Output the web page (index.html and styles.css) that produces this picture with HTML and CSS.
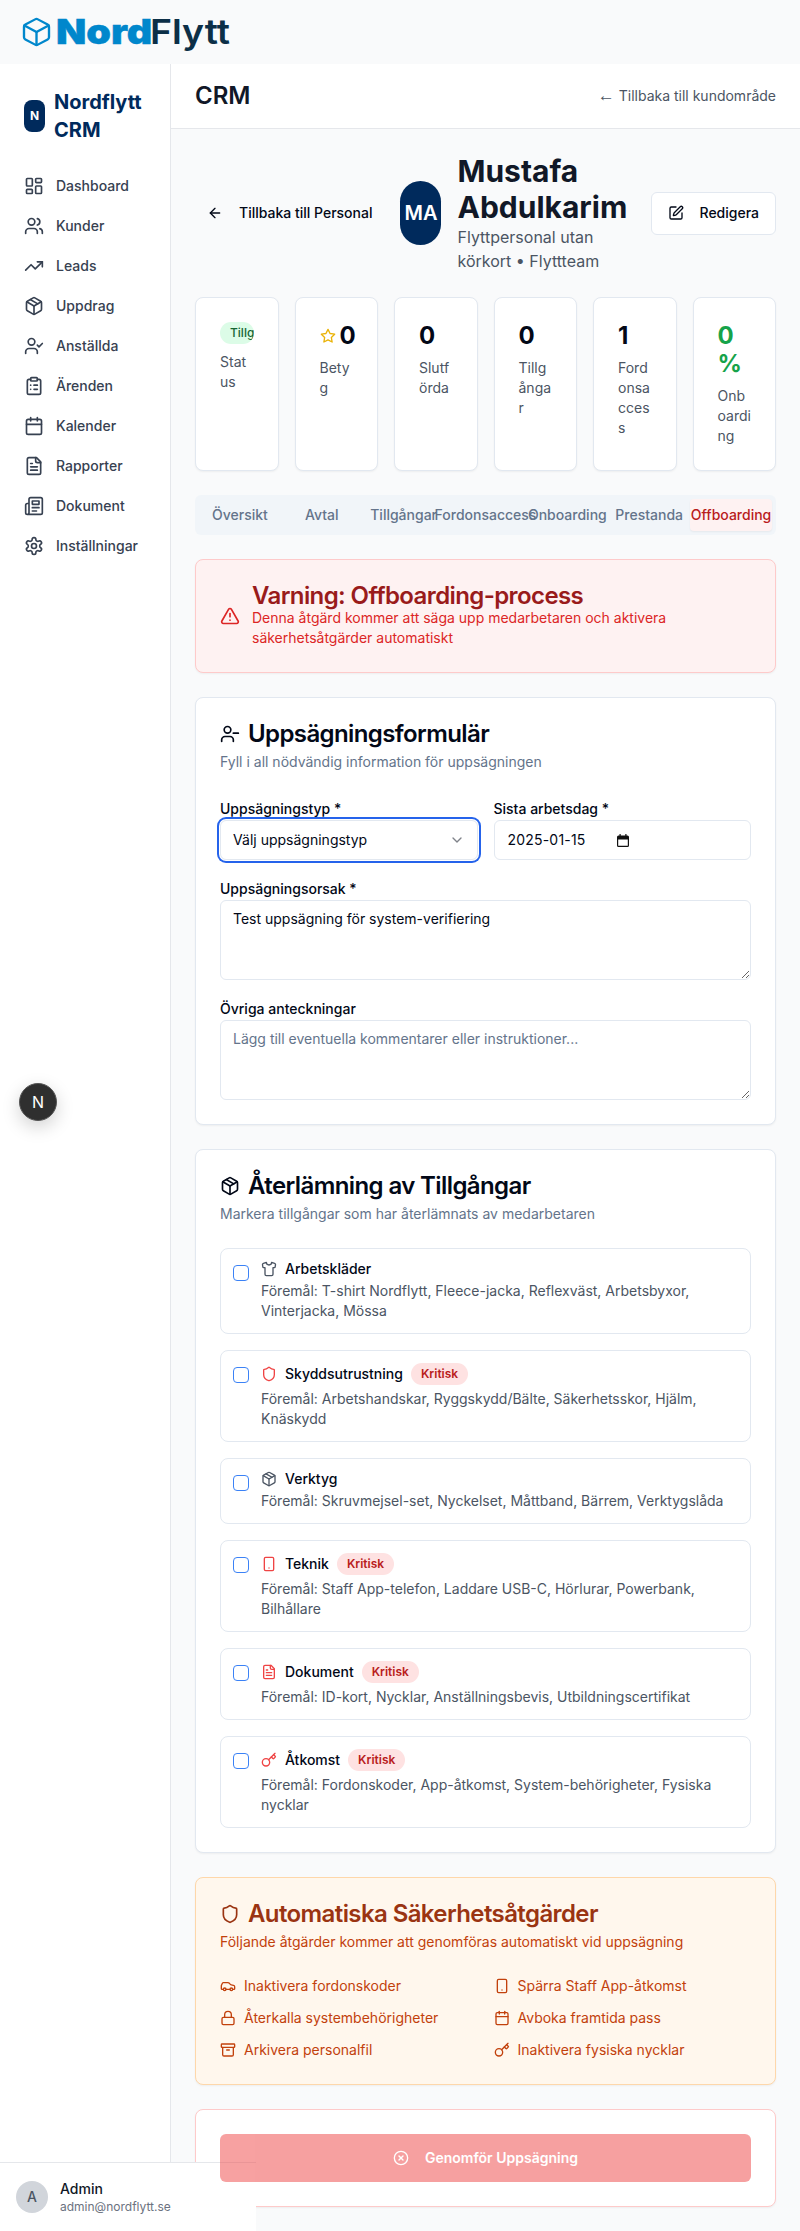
FILE: index.html
```html
<!DOCTYPE html>
<html lang="sv">
<head>
    <meta charset="UTF-8">
    <meta name="viewport" content="width=device-width, initial-scale=1.0">
    <title>Nordflytt CRM - Offboarding</title>
    <link rel="stylesheet" href="styles.css">
</head>
<body>
    <svg class="sprite" xmlns="http://www.w3.org/2000/svg">
        <symbol id="i-dashboard" viewBox="0 0 24 24"><rect x="3" y="3" width="7" height="9" rx="1"/><rect x="14" y="3" width="7" height="5" rx="1"/><rect x="14" y="12" width="7" height="9" rx="1"/><rect x="3" y="16" width="7" height="5" rx="1"/></symbol>
        <symbol id="i-users" viewBox="0 0 24 24"><path d="M16 21v-2a4 4 0 0 0-4-4H6a4 4 0 0 0-4 4v2"/><circle cx="9" cy="7" r="4"/><path d="M22 21v-2a4 4 0 0 0-3-3.87"/><path d="M16 3.13a4 4 0 0 1 0 7.75"/></symbol>
        <symbol id="i-trending" viewBox="0 0 24 24"><polyline points="22 7 13.5 15.5 8.5 10.5 2 17"/><polyline points="16 7 22 7 22 13"/></symbol>
        <symbol id="i-package" viewBox="0 0 24 24"><path d="m7.5 4.27 9 5.15"/><path d="M21 8a2 2 0 0 0-1-1.73l-7-4a2 2 0 0 0-2 0l-7 4A2 2 0 0 0 3 8v8a2 2 0 0 0 1 1.73l7 4a2 2 0 0 0 2 0l7-4A2 2 0 0 0 21 16Z"/><path d="m3.3 7 8.7 5 8.7-5"/><path d="M12 22V12"/></symbol>
        <symbol id="i-user-check" viewBox="0 0 24 24"><path d="M16 21v-2a4 4 0 0 0-4-4H6a4 4 0 0 0-4 4v2"/><circle cx="9" cy="7" r="4"/><polyline points="16 11 18 13 22 9"/></symbol>
        <symbol id="i-user-minus" viewBox="0 0 24 24"><path d="M16 21v-2a4 4 0 0 0-4-4H6a4 4 0 0 0-4 4v2"/><circle cx="9" cy="7" r="4"/><path d="M22 11h-6"/></symbol>
        <symbol id="i-clipboard" viewBox="0 0 24 24"><rect x="8" y="2" width="8" height="4" rx="1"/><path d="M16 4h2a2 2 0 0 1 2 2v14a2 2 0 0 1-2 2H6a2 2 0 0 1-2-2V6a2 2 0 0 1 2-2h2"/><path d="M12 11h4"/><path d="M12 16h4"/><path d="M8 11h.01"/><path d="M8 16h.01"/></symbol>
        <symbol id="i-calendar" viewBox="0 0 24 24"><path d="M8 2v4"/><path d="M16 2v4"/><rect x="3" y="4" width="18" height="18" rx="2"/><path d="M3 10h18"/></symbol>
        <symbol id="i-file" viewBox="0 0 24 24"><path d="M15 2H6a2 2 0 0 0-2 2v16a2 2 0 0 0 2 2h12a2 2 0 0 0 2-2V7Z"/><path d="M14 2v4a2 2 0 0 0 2 2h4"/><path d="M10 9H8"/><path d="M16 13H8"/><path d="M16 17H8"/></symbol>
        <symbol id="i-newspaper" viewBox="0 0 24 24"><path d="M4 22h16a2 2 0 0 0 2-2V4a2 2 0 0 0-2-2H8a2 2 0 0 0-2 2v16a2 2 0 0 1-2 2Zm0 0a2 2 0 0 1-2-2v-9c0-1.1.9-2 2-2h2"/><path d="M18 14h-8"/><path d="M15 18h-5"/><path d="M10 6h8v4h-8V6Z"/></symbol>
        <symbol id="i-settings" viewBox="0 0 24 24"><path d="M12.22 2h-.44a2 2 0 0 0-2 2v.18a2 2 0 0 1-1 1.73l-.43.25a2 2 0 0 1-2 0l-.15-.08a2 2 0 0 0-2.73.73l-.22.38a2 2 0 0 0 .73 2.73l.15.1a2 2 0 0 1 1 1.72v.51a2 2 0 0 1-1 1.74l-.15.09a2 2 0 0 0-.73 2.73l.22.38a2 2 0 0 0 2.73.73l.15-.08a2 2 0 0 1 2 0l.43.25a2 2 0 0 1 1 1.73V20a2 2 0 0 0 2 2h.44a2 2 0 0 0 2-2v-.18a2 2 0 0 1 1-1.73l.43-.25a2 2 0 0 1 2 0l.15.08a2 2 0 0 0 2.73-.73l.22-.39a2 2 0 0 0-.73-2.73l-.15-.08a2 2 0 0 1-1-1.74v-.5a2 2 0 0 1 1-1.74l.15-.09a2 2 0 0 0 .73-2.73l-.22-.38a2 2 0 0 0-2.73-.73l-.15.08a2 2 0 0 1-2 0l-.43-.25a2 2 0 0 1-1-1.73V4a2 2 0 0 0-2-2z"/><circle cx="12" cy="12" r="3"/></symbol>
        <symbol id="i-arrow-left" viewBox="0 0 24 24"><path d="m12 19-7-7 7-7"/><path d="M19 12H5"/></symbol>
        <symbol id="i-pen" viewBox="0 0 24 24"><path d="M12 3H5a2 2 0 0 0-2 2v14a2 2 0 0 0 2 2h14a2 2 0 0 0 2-2v-7"/><path d="M18.375 2.625a1 1 0 0 1 3 3l-9.013 9.014a2 2 0 0 1-.853.505l-2.873.84a.5.5 0 0 1-.62-.62l.84-2.873a2 2 0 0 1 .506-.852z"/></symbol>
        <symbol id="i-star" viewBox="0 0 24 24"><polygon points="12 2 15.09 8.26 22 9.27 17 14.14 18.18 21.02 12 17.77 5.82 21.02 7 14.14 2 9.27 8.91 8.26 12 2"/></symbol>
        <symbol id="i-alert" viewBox="0 0 24 24"><path d="m21.73 18-8-14a2 2 0 0 0-3.48 0l-8 14A2 2 0 0 0 4 21h16a2 2 0 0 0 1.73-3"/><path d="M12 9v4"/><path d="M12 17h.01"/></symbol>
        <symbol id="i-chevron" viewBox="0 0 24 24"><path d="m6 9 6 6 6-6"/></symbol>
        <symbol id="i-shirt" viewBox="0 0 24 24"><path d="M20.38 3.46 16 2a4 4 0 0 1-8 0L3.62 3.46a2 2 0 0 0-1.34 2.23l.58 3.47a1 1 0 0 0 .99.84H6v10c0 1.1.9 2 2 2h8a2 2 0 0 0 2-2V10h2.15a1 1 0 0 0 .99-.84l.58-3.47a2 2 0 0 0-1.34-2.23z"/></symbol>
        <symbol id="i-shield" viewBox="0 0 24 24"><path d="M20 13c0 5-3.5 7.5-7.66 8.95a1 1 0 0 1-.67-.01C7.5 20.5 4 18 4 13V6a1 1 0 0 1 1-1c2 0 4.5-1.2 6.24-2.72a1.17 1.17 0 0 1 1.52 0C14.51 3.81 17 5 19 5a1 1 0 0 1 1 1z"/></symbol>
        <symbol id="i-phone" viewBox="0 0 24 24"><rect x="5" y="2" width="14" height="20" rx="2"/><path d="M12 18h.01"/></symbol>
        <symbol id="i-key" viewBox="0 0 24 24"><path d="m15.5 7.5 2.3 2.3a1 1 0 0 0 1.4 0l2.1-2.1a1 1 0 0 0 0-1.4L19 4"/><path d="m21 2-9.6 9.6"/><circle cx="7.5" cy="15.5" r="5.5"/></symbol>
        <symbol id="i-car" viewBox="0 0 24 24"><path d="M19 17h2c.6 0 1-.4 1-1v-3c0-.9-.7-1.7-1.5-1.9C18.7 10.6 16 10 16 10s-1.3-1.4-2.2-2.3c-.5-.4-1.1-.7-1.8-.7H5c-.6 0-1.1.4-1.4.9l-1.4 2.9A3.7 3.7 0 0 0 2 12v4c0 .6.4 1 1 1h2"/><circle cx="7" cy="17" r="2"/><path d="M9 17h6"/><circle cx="17" cy="17" r="2"/></symbol>
        <symbol id="i-lock" viewBox="0 0 24 24"><rect x="3" y="11" width="18" height="11" rx="2"/><path d="M7 11V7a5 5 0 0 1 10 0v4"/></symbol>
        <symbol id="i-archive" viewBox="0 0 24 24"><rect x="2" y="3" width="20" height="5" rx="1"/><path d="M4 8v11a2 2 0 0 0 2 2h12a2 2 0 0 0 2-2V8"/><path d="M10 12h4"/></symbol>
        <symbol id="i-circle-x" viewBox="0 0 24 24"><circle cx="12" cy="12" r="10"/><path d="m15 9-6 6"/><path d="m9 9 6 6"/></symbol>
    </svg>

    <div class="logo-bar">
        <svg class="logo-cube" viewBox="3 2 18 20" preserveAspectRatio="none">
            <path d="M21 8a2 2 0 0 0-1-1.73l-7-4a2 2 0 0 0-2 0l-7 4A2 2 0 0 0 3 8v8a2 2 0 0 0 1 1.73l7 4a2 2 0 0 0 2 0l7-4A2 2 0 0 0 21 16Z"/>
            <path d="m3.3 7 8.7 5 8.7-5"/>
            <path d="M12 22V12"/>
        </svg>
        <span class="logo-text"><span class="logo-nord">Nord</span><span class="logo-flytt">Flytt</span></span>
    </div>

    <div class="app">
        <aside class="sidebar">
            <div class="brand">
                <div class="brand-mark">N</div>
                <div class="brand-name">Nordflytt CRM</div>
            </div>
            <nav class="nav">
                <a class="nav-item"><svg class="icon icon-20"><use href="#i-dashboard"/></svg>Dashboard</a>
                <a class="nav-item"><svg class="icon icon-20"><use href="#i-users"/></svg>Kunder</a>
                <a class="nav-item"><svg class="icon icon-20"><use href="#i-trending"/></svg>Leads</a>
                <a class="nav-item"><svg class="icon icon-20"><use href="#i-package"/></svg>Uppdrag</a>
                <a class="nav-item"><svg class="icon icon-20"><use href="#i-user-check"/></svg>Anställda</a>
                <a class="nav-item"><svg class="icon icon-20"><use href="#i-clipboard"/></svg>Ärenden</a>
                <a class="nav-item"><svg class="icon icon-20"><use href="#i-calendar"/></svg>Kalender</a>
                <a class="nav-item"><svg class="icon icon-20"><use href="#i-file"/></svg>Rapporter</a>
                <a class="nav-item"><svg class="icon icon-20"><use href="#i-newspaper"/></svg>Dokument</a>
                <a class="nav-item"><svg class="icon icon-20"><use href="#i-settings"/></svg>Inställningar</a>
            </nav>
            <div class="user-box">
                <div class="user-avatar">A</div>
                <div>
                    <div class="user-name">Admin</div>
                    <div class="user-mail">admin@nordflytt.se</div>
                </div>
            </div>
        </aside>

        <div class="dev-badge">N</div>

        <div class="main">
            <header class="topbar">
                <h1>CRM</h1>
                <a class="topbar-link"><span class="topbar-arrow">←</span> Tillbaka till kundområde</a>
            </header>

            <main class="content">
                <div class="profile">
                    <a class="back-link"><svg class="icon"><use href="#i-arrow-left"/></svg>Tillbaka till Personal</a>
                    <div class="profile-avatar">MA</div>
                    <div class="profile-info">
                        <h2>Mustafa Abdulkarim</h2>
                        <p>Flyttpersonal utan körkort • Flyttteam</p>
                    </div>
                    <button class="edit-btn"><svg class="icon"><use href="#i-pen"/></svg>Redigera</button>
                </div>

                <div class="stats">
                    <div class="stat">
                        <div class="status-badge">Tillgänglig</div>
                        <div class="stat-label">Status</div>
                    </div>
                    <div class="stat">
                        <div class="stat-value stat-rating"><svg class="icon star"><use href="#i-star"/></svg>0</div>
                        <div class="stat-label">Betyg</div>
                    </div>
                    <div class="stat">
                        <div class="stat-value">0</div>
                        <div class="stat-label">Slutförda</div>
                    </div>
                    <div class="stat">
                        <div class="stat-value">0</div>
                        <div class="stat-label">Tillgångar</div>
                    </div>
                    <div class="stat">
                        <div class="stat-value">1</div>
                        <div class="stat-label">Fordonsaccess</div>
                    </div>
                    <div class="stat">
                        <div class="stat-value stat-green">0%</div>
                        <div class="stat-label">Onboarding</div>
                    </div>
                </div>

                <div class="tabs">
                    <div class="tab">Översikt</div>
                    <div class="tab">Avtal</div>
                    <div class="tab">Tillgångar</div>
                    <div class="tab">Fordonsaccess</div>
                    <div class="tab">Onboarding</div>
                    <div class="tab">Prestanda</div>
                    <div class="tab tab-active">Offboarding</div>
                </div>

                <div class="warning">
                    <svg class="icon icon-20"><use href="#i-alert"/></svg>
                    <div>
                        <h3 class="card-title">Varning: Offboarding-process</h3>
                        <p class="warning-text">Denna åtgärd kommer att säga upp medarbetaren och aktivera säkerhetsåtgärder automatiskt</p>
                    </div>
                </div>

                <section class="card">
                    <h3 class="card-title card-title-icon"><svg class="icon icon-20"><use href="#i-user-minus"/></svg>Uppsägningsformulär</h3>
                    <p class="card-desc">Fyll i all nödvändig information för uppsägningen</p>
                    <form class="form">
                        <div class="form-row">
                            <div>
                                <label class="label">Uppsägningstyp *</label>
                                <button type="button" class="select-btn">Välj uppsägningstyp<svg class="icon chevron"><use href="#i-chevron"/></svg></button>
                            </div>
                            <div>
                                <label class="label">Sista arbetsdag *</label>
                                <div class="input date-field">
                                    <span class="date-value">2025-01-15</span>
                                    <svg class="date-icon" viewBox="0 0 12 13"><path d="M1.5 1.5h1V0h1.2v1.5h4.6V0h1.2v1.5h1A1.5 1.5 0 0 1 12 3v8.5a1.5 1.5 0 0 1-1.5 1.5h-9A1.5 1.5 0 0 1 0 11.5V3a1.5 1.5 0 0 1 1.5-1.5Zm-.3 4v6a.3.3 0 0 0 .3.3h9a.3.3 0 0 0 .3-.3v-6Z"/></svg>
                                </div>
                            </div>
                        </div>
                        <div>
                            <label class="label" for="reason">Uppsägningsorsak *</label>
                            <textarea class="input textarea" id="reason">Test uppsägning för system-verifiering</textarea>
                        </div>
                        <div>
                            <label class="label" for="notes">Övriga anteckningar</label>
                            <textarea class="input textarea" id="notes" placeholder="Lägg till eventuella kommentarer eller instruktioner..."></textarea>
                        </div>
                    </form>
                </section>

                <section class="card">
                    <h3 class="card-title card-title-icon"><svg class="icon icon-20"><use href="#i-package"/></svg>Återlämning av Tillgångar</h3>
                    <p class="card-desc">Markera tillgångar som har återlämnats av medarbetaren</p>
                    <div class="assets">
                        <div class="asset">
                            <span class="checkbox"></span>
                            <div>
                                <div class="asset-head"><svg class="icon icon-gray"><use href="#i-shirt"/></svg><span class="asset-name">Arbetskläder</span></div>
                                <p class="asset-items">Föremål: T-shirt Nordflytt, Fleece-jacka, Reflexväst, Arbetsbyxor, Vinterjacka, Mössa</p>
                            </div>
                        </div>
                        <div class="asset">
                            <span class="checkbox"></span>
                            <div>
                                <div class="asset-head"><svg class="icon icon-red"><use href="#i-shield"/></svg><span class="asset-name">Skyddsutrustning</span><span class="critical">Kritisk</span></div>
                                <p class="asset-items">Föremål: Arbetshandskar, Ryggskydd/Bälte, Säkerhetsskor, Hjälm, Knäskydd</p>
                            </div>
                        </div>
                        <div class="asset">
                            <span class="checkbox"></span>
                            <div>
                                <div class="asset-head"><svg class="icon icon-gray"><use href="#i-package"/></svg><span class="asset-name">Verktyg</span></div>
                                <p class="asset-items">Föremål: Skruvmejsel-set, Nyckelset, Måttband, Bärrem, Verktygslåda</p>
                            </div>
                        </div>
                        <div class="asset">
                            <span class="checkbox"></span>
                            <div>
                                <div class="asset-head"><svg class="icon icon-red"><use href="#i-phone"/></svg><span class="asset-name">Teknik</span><span class="critical">Kritisk</span></div>
                                <p class="asset-items">Föremål: Staff App-telefon, Laddare USB-C, Hörlurar, Powerbank, Bilhållare</p>
                            </div>
                        </div>
                        <div class="asset">
                            <span class="checkbox"></span>
                            <div>
                                <div class="asset-head"><svg class="icon icon-red"><use href="#i-file"/></svg><span class="asset-name">Dokument</span><span class="critical">Kritisk</span></div>
                                <p class="asset-items">Föremål: ID-kort, Nycklar, Anställningsbevis, Utbildningscertifikat</p>
                            </div>
                        </div>
                        <div class="asset">
                            <span class="checkbox"></span>
                            <div>
                                <div class="asset-head"><svg class="icon icon-red"><use href="#i-key"/></svg><span class="asset-name">Åtkomst</span><span class="critical">Kritisk</span></div>
                                <p class="asset-items">Föremål: Fordonskoder, App-åtkomst, System-behörigheter, Fysiska nycklar</p>
                            </div>
                        </div>
                    </div>
                </section>

                <section class="card card-orange">
                    <h3 class="card-title card-title-icon"><svg class="icon icon-20"><use href="#i-shield"/></svg>Automatiska Säkerhetsåtgärder</h3>
                    <p class="card-desc">Följande åtgärder kommer att genomföras automatiskt vid uppsägning</p>
                    <ul class="measures">
                        <li><svg class="icon"><use href="#i-car"/></svg>Inaktivera fordonskoder</li>
                        <li><svg class="icon"><use href="#i-phone"/></svg>Spärra Staff App-åtkomst</li>
                        <li><svg class="icon"><use href="#i-lock"/></svg>Återkalla systembehörigheter</li>
                        <li><svg class="icon"><use href="#i-calendar"/></svg>Avboka framtida pass</li>
                        <li><svg class="icon"><use href="#i-archive"/></svg>Arkivera personalfil</li>
                        <li><svg class="icon"><use href="#i-key"/></svg>Inaktivera fysiska nycklar</li>
                    </ul>
                </section>

                <section class="card card-submit">
                    <button class="submit-btn" disabled><svg class="icon"><use href="#i-circle-x"/></svg>Genomför Uppsägning</button>
                </section>
            </main>
        </div>
    </div>
</body>
</html>
```

FILE: styles.css
```css
* {
    margin: 0;
    padding: 0;
    box-sizing: border-box;
}

body {
    font-family: Inter, 'Liberation Sans', sans-serif;
    font-size: 14px;
    line-height: 20px;
    color: #020817;
    background: #f9fafb;
}

.sprite {
    display: none;
}

.icon {
    width: 16px;
    height: 16px;
    flex-shrink: 0;
    fill: none;
    stroke: currentColor;
    stroke-width: 2;
    stroke-linecap: round;
    stroke-linejoin: round;
}

.icon-20 {
    width: 20px;
    height: 20px;
}

/* Logo strip */
.logo-bar {
    height: 64px;
    padding-left: 24px;
    display: flex;
    align-items: center;
    gap: 7px;
    background: #f9fafb;
}

.logo-cube {
    width: 25px;
    height: 26px;
    flex-shrink: 0;
    overflow: visible;
    fill: none;
    stroke: #0087cc;
    stroke-width: 1.7;
    stroke-linecap: round;
    stroke-linejoin: round;
}

.logo-text {
    display: flex;
    font-size: 34px;
    line-height: 40px;
}

/* the real logo is a wide face, so the letters get stretched */
.logo-nord {
    width: 94px;
    color: #0087cc;
    font-weight: 900;
    -webkit-text-stroke: 0.4px #0087cc;
    transform: scaleX(1.16);
    transform-origin: left center;
}

.logo-flytt {
    color: #0c2f47;
    font-weight: 600;
    transform: scaleX(1.1);
    transform-origin: left center;
}

/* App frame */
.app {
    position: relative;
    display: flex;
}

.sidebar {
    width: 171px;
    flex-shrink: 0;
    background: white;
    border-right: 1px solid #e5e7eb;
}

.brand {
    padding: 24px 24px 22px;
    display: flex;
    align-items: center;
    gap: 9px;
}

.brand-mark {
    width: 21px;
    height: 32px;
    flex-shrink: 0;
    border-radius: 8px;
    background: #002a5c;
    color: white;
    font-size: 12px;
    font-weight: 700;
    display: flex;
    align-items: center;
    justify-content: center;
}

.brand-name {
    font-size: 20px;
    line-height: 28px;
    font-weight: 700;
    color: #002a5c;
}

.nav {
    padding: 0 24px;
}

.nav-item {
    height: 40px;
    display: flex;
    align-items: center;
    gap: 12px;
    color: #374151;
    font-weight: 500;
}

.user-box {
    position: absolute;
    left: 0;
    bottom: 0;
    width: 256px;
    padding: 16px;
    display: flex;
    align-items: center;
    gap: 12px;
    background: white;
    border-top: 1px solid #e5e7eb;
}

.user-avatar {
    width: 32px;
    height: 32px;
    border-radius: 50%;
    background: #d1d5db;
    color: #4b5563;
    font-weight: 500;
    display: flex;
    align-items: center;
    justify-content: center;
}

.user-name {
    font-weight: 500;
    color: #111827;
}

.user-mail {
    font-size: 12px;
    line-height: 16px;
    color: #6b7280;
}

.dev-badge {
    position: absolute;
    left: 19px;
    top: 1019px;
    width: 38px;
    height: 38px;
    border-radius: 50%;
    background: #2f2f2f;
    border: 1px solid #555;
    box-shadow: 0 6px 18px rgba(0, 0, 0, 0.18);
    color: white;
    font-size: 16px;
    display: flex;
    align-items: center;
    justify-content: center;
}

/* Main column */
.main {
    flex: 1;
    min-width: 0;
}

.topbar {
    height: 65px;
    padding: 0 24px;
    display: flex;
    align-items: center;
    justify-content: space-between;
    background: white;
    border-bottom: 1px solid #e5e7eb;
}

.topbar h1 {
    font-size: 24px;
    line-height: 32px;
    font-weight: 600;
    color: #111827;
}

.topbar-link {
    color: #4b5563;
}

.topbar-arrow {
    font-family: 'Liberation Sans', sans-serif;
    font-size: 17px;
    line-height: 1;
}

.content {
    padding: 24px;
    display: flex;
    flex-direction: column;
    gap: 24px;
}

/* Profile header */
.profile {
    display: flex;
    align-items: center;
    gap: 16px;
}

.back-link {
    padding: 0 12px;
    display: flex;
    align-items: center;
    gap: 16px;
    flex-shrink: 0;
    font-weight: 500;
}

.profile-avatar {
    width: 41px;
    height: 64px;
    flex-shrink: 0;
    border-radius: 9999px;
    background: #002a5c;
    color: white;
    font-size: 20px;
    font-weight: 600;
    display: flex;
    align-items: center;
    justify-content: center;
}

.profile-info {
    flex: 1;
    min-width: 0;
}

.profile-info h2 {
    font-size: 30px;
    line-height: 36px;
    font-weight: 700;
    color: #111827;
}

.profile-info p {
    font-size: 16px;
    line-height: 24px;
    color: #4b5563;
}

.edit-btn {
    height: 43px;
    padding: 0 16px;
    display: flex;
    align-items: center;
    gap: 16px;
    flex-shrink: 0;
    font: inherit;
    font-weight: 500;
    color: #020817;
    background: white;
    border: 1px solid #e2e8f0;
    border-radius: 6px;
}

/* Stat cards */
.stats {
    display: grid;
    grid-template-columns: repeat(6, minmax(0, 1fr));
    gap: 16px;
}

.stat {
    min-width: 0;
    padding: 24px;
    background: white;
    border: 1px solid #e2e8f0;
    border-radius: 8px;
    box-shadow: 0 1px 2px rgba(0, 0, 0, 0.05);
}

.stat-value {
    font-size: 24px;
    line-height: 28px;
    font-weight: 700;
    overflow-wrap: anywhere;
}

.stat-rating {
    display: flex;
    align-items: center;
    gap: 4px;
}

.star {
    color: #eab308;
}

.stat-green {
    color: #16a34a;
}

.stat-label {
    margin-top: 8px;
    color: #4b5563;
    overflow-wrap: anywhere;
}

.status-badge {
    height: 22px;
    padding: 0 10px;
    border-radius: 9999px;
    background: #dcfce7;
    color: #166534;
    font-size: 12px;
    font-weight: 500;
    line-height: 22px;
    white-space: nowrap;
    overflow: hidden;
}

/* Tabs */
.tabs {
    height: 40px;
    padding: 4px;
    display: grid;
    grid-template-columns: repeat(7, minmax(0, 1fr));
    background: #f1f5f9;
    border-radius: 6px;
}

.tab {
    min-width: 0;
    display: flex;
    align-items: center;
    justify-content: center;
    border-radius: 4px;
    font-weight: 500;
    color: #64748b;
    white-space: nowrap;
}

.tab-active {
    background: #fef2f2;
    color: #b91c1c;
    box-shadow: 0 1px 2px rgba(0, 0, 0, 0.05);
}

/* Warning */
.warning {
    padding: 24px;
    display: flex;
    align-items: center;
    gap: 12px;
    background: #fef2f2;
    border: 1px solid #fecaca;
    border-radius: 8px;
    box-shadow: 0 1px 2px rgba(0, 0, 0, 0.05);
    color: #dc2626;
}

.warning .card-title {
    color: #991b1b;
}

/* Cards */
.card {
    padding: 24px;
    background: white;
    border: 1px solid #e2e8f0;
    border-radius: 8px;
    box-shadow: 0 1px 2px rgba(0, 0, 0, 0.05);
}

.card-title {
    font-size: 24px;
    line-height: 24px;
    font-weight: 600;
    letter-spacing: -0.6px;
}

.card-title-icon {
    display: flex;
    align-items: center;
    gap: 8px;
}

.card-desc {
    margin-top: 6px;
    color: #64748b;
}

/* Form */
.form {
    margin-top: 24px;
    display: flex;
    flex-direction: column;
    gap: 16px;
}

.form-row {
    display: grid;
    grid-template-columns: 1fr 1fr;
    gap: 16px;
}

.label {
    display: block;
    margin-top: 3px;
    margin-bottom: 1px;
    font-weight: 500;
}

.select-btn {
    width: 100%;
    height: 40px;
    padding: 0 12px;
    display: flex;
    align-items: center;
    justify-content: space-between;
    font: inherit;
    color: #020817;
    background: white;
    border: 1px solid #e2e8f0;
    border-radius: 6px;
    box-shadow: 0 0 0 1px white, 0 0 0 3px #2563eb;
}

.chevron {
    opacity: 0.5;
}

.input {
    display: flex;
    width: 100%;
    height: 40px;
    padding: 0 12px;
    font: inherit;
    color: #020817;
    background: white;
    border: 1px solid #e2e8f0;
    border-radius: 6px;
}

.date-field {
    align-items: center;
    padding-left: 13px;
}

.date-value {
    width: 109px;
    letter-spacing: 0.2px;
}

.date-icon {
    width: 12px;
    height: 13px;
    fill: #111;
}

.textarea {
    height: 80px;
    padding: 8px 12px;
}

.textarea::placeholder {
    color: #64748b;
}

/* Asset list */
.assets {
    margin-top: 24px;
    display: flex;
    flex-direction: column;
    gap: 16px;
}

.asset {
    padding: 12px;
    display: flex;
    align-items: flex-start;
    gap: 12px;
    border: 1px solid #e2e8f0;
    border-radius: 8px;
}

.checkbox {
    width: 16px;
    height: 16px;
    margin-top: 4px;
    flex-shrink: 0;
    border: 1px solid #3b82f6;
    border-radius: 4px;
}

.asset-head {
    min-height: 16px;
    margin-bottom: 4px;
    display: flex;
    align-items: center;
    gap: 8px;
}

.asset-name {
    line-height: 16px;
    font-weight: 500;
}

.icon-gray {
    color: #4b5563;
}

.icon-red {
    color: #ef4444;
}

.critical {
    height: 22px;
    padding: 0 10px;
    border-radius: 9999px;
    background: #fee2e2;
    color: #b91c1c;
    font-size: 12px;
    line-height: 22px;
    font-weight: 600;
}

.asset-items {
    color: #4b5563;
}

/* Security measures */
.card-orange {
    background: #fff7ed;
    border-color: #fed7aa;
    color: #c2410c;
}

.card-orange .card-title {
    color: #9a3412;
}

.card-orange .card-desc {
    color: #c2410c;
}

.measures {
    margin-top: 24px;
    list-style: none;
    display: grid;
    grid-template-columns: 1fr 1fr;
    gap: 12px 16px;
}

.measures li {
    display: flex;
    align-items: center;
    gap: 8px;
}

/* Submit */
.card-submit {
    border-color: #fecaca;
}

.submit-btn {
    width: 100%;
    height: 48px;
    display: flex;
    align-items: center;
    justify-content: center;
    gap: 16px;
    font: inherit;
    font-weight: 600;
    color: white;
    background: #ef4444;
    border: none;
    border-radius: 6px;
    opacity: 0.5;
}

@media (max-width: 600px) {
    .form-row,
    .measures {
        grid-template-columns: 1fr;
    }
}
```
